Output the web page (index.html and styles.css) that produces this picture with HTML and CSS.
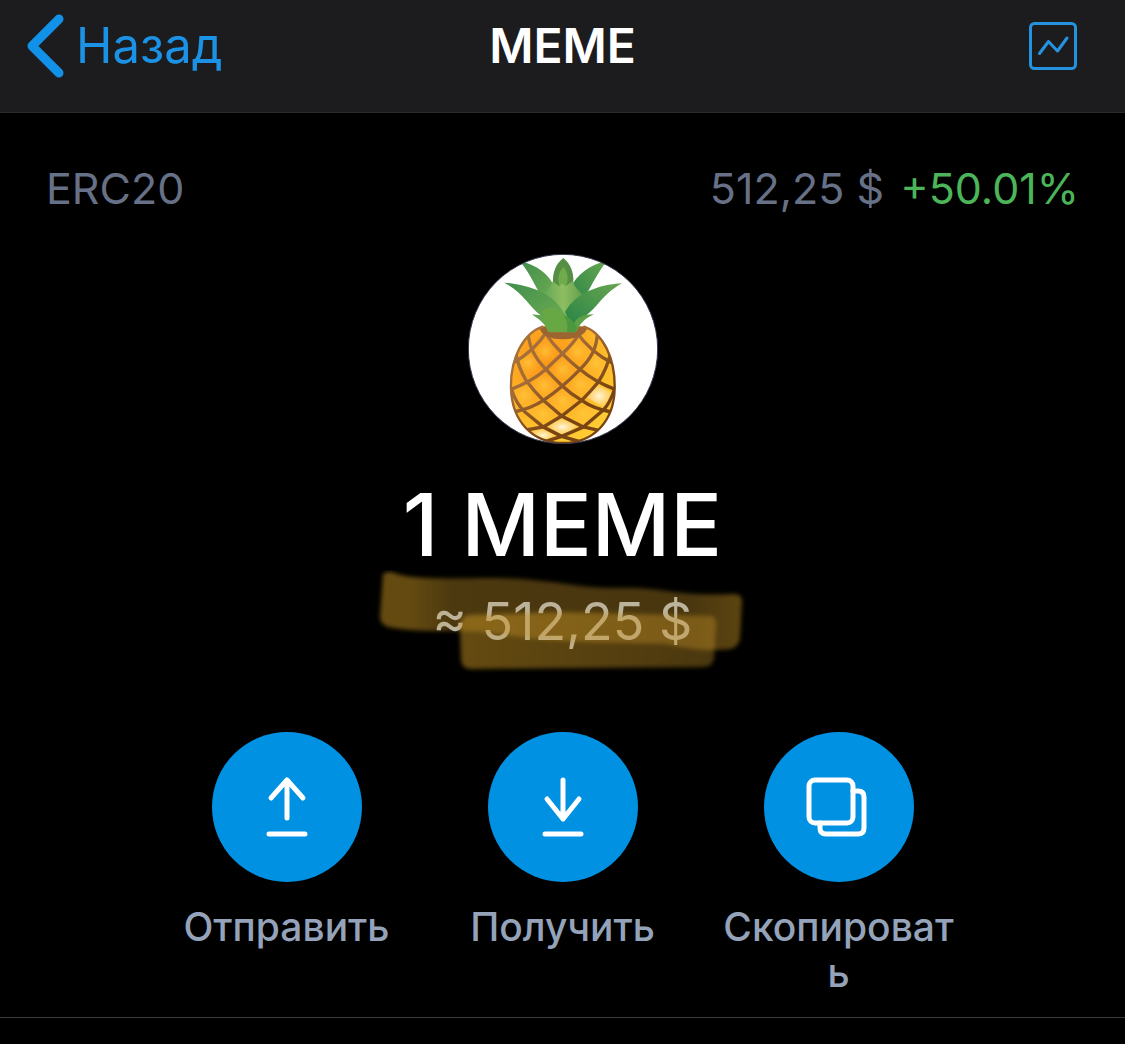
FILE: index.html
```html
<!DOCTYPE html>
<html lang="ru">
<head>
<meta charset="utf-8">
<meta name="viewport" content="width=device-width, initial-scale=1">
<title>MEME</title>
<link rel="stylesheet" href="styles.css">
</head>
<body>
<header class="navbar">
  <a class="back" href="#">
    <svg class="back-icon" viewBox="0 0 38 64" aria-hidden="true"><path d="M33 5 6 32l27 27"/></svg>
    <span>Назад</span>
  </a>
  <h1 class="navbar-title">MEME</h1>
  <button class="chart-button" type="button" aria-label="График">
    <svg class="chart-icon" viewBox="0 0 48 48" aria-hidden="true"><rect x="1.5" y="1.5" width="45" height="45" rx="4"/><path d="M10.500 31.500 19.500 19.500l9 9.500L38 16"/></svg>
  </button>
</header>
<main>
  <div class="info">
    <span>ERC20</span>
    <span class="price">512,25 $ <span class="change">+50.01%</span></span>
  </div>
  <section class="balance">
    <svg class="coin" viewBox="24 26 570 570" role="img" aria-label="Ананас">
      <defs>
        <clipPath id="disc"><circle cx="309" cy="311" r="285"/></clipPath>
        <clipPath id="fruit"><path d="M250 243C190 262 150 340 153 430 156 525 215 593 309 593S462 525 464 430C466 340 430 262 370 243Z"/></clipPath>
        <radialGradient id="skin" cx=".35" cy=".3" r=".75"><stop offset="0" stop-color="#fb9417"/><stop offset=".5" stop-color="#feae24"/><stop offset="1" stop-color="#ffd034"/></radialGradient>
        <radialGradient id="cell"><stop offset="0" stop-color="#ffc83c" stop-opacity=".8"/><stop offset="1" stop-color="#ffb52b" stop-opacity="0"/></radialGradient>
        <radialGradient id="shine"><stop offset="0" stop-color="#fff6df"/><stop offset="1" stop-color="#ffd677" stop-opacity=".5"/></radialGradient>
        <linearGradient id="net" x1="150" y1="240" x2="350" y2="500" gradientUnits="userSpaceOnUse"><stop offset="0" stop-color="#a8743b"/><stop offset=".5" stop-color="#a36b36"/><stop offset="1" stop-color="#794413"/></linearGradient>
        <linearGradient id="leafLeft" x1="0" y1="0" x2="1" y2="1"><stop offset="0" stop-color="#418e4d"/><stop offset="1" stop-color="#72af52"/></linearGradient>
        <linearGradient id="leafRight" x1="1" y1="0" x2="0" y2="1"><stop offset="0" stop-color="#68a651"/><stop offset="1" stop-color="#288346"/></linearGradient>
        <linearGradient id="leafMid" x1="0" y1="0" x2="1" y2="0"><stop offset="0" stop-color="#5da553"/><stop offset=".5" stop-color="#8fbd61"/><stop offset="1" stop-color="#5b9d4b"/></linearGradient>
      </defs>
      <circle cx="309" cy="311" r="284" fill="#fff"/>
      <g clip-path="url(#disc)">
        <g clip-path="url(#fruit)">
          <path d="M140 230h340v370H140Z" fill="url(#skin)"/>
          <g fill="url(#cell)">
            <circle cx="256" cy="318" r="38"/><circle cx="352" cy="318" r="38"/><circle cx="205" cy="352" r="38"/><circle cx="307" cy="372" r="38"/><circle cx="408" cy="354" r="42"/>
            <circle cx="252" cy="419" r="42"/><circle cx="362" cy="417" r="44"/><circle cx="193" cy="448" r="40"/><circle cx="307" cy="466" r="42"/><circle cx="248" cy="505" r="44"/><circle cx="370" cy="505" r="44"/>
          </g>
          <path d="M378 456 415 418l42 24-27 43Z" fill="url(#shine)"/>
          <path d="M262 542 305 519l48 24-46 27Z" fill="url(#shine)"/>
          <path d="M214 558 247 550l38 20-36 20Z" fill="url(#shine)"/>
          <g fill="none" stroke="url(#net)" stroke-width="10">
            <path d="M204 260C206 305 226 340 258 372Q282 398 307 422T365 465Q400 490 455 500"/>
            <path d="M250 255Q276 294 307 325T360 372Q404 410 470 434"/>
            <path d="M348 258Q390 320 462 356"/>
            <path d="M166 318Q175 368 200 408Q222 438 250 465L305 512 370 545 420 556"/>
            <path d="M154 430Q167 474 195 500L250 545 305 573 370 592"/>
            <path d="M412 260C412 308 392 340 360 372Q335 398 307 422T250 465Q216 488 162 500"/>
            <path d="M365 255Q341 294 307 325T258 372Q214 410 148 434"/>
            <path d="M262 255Q226 316 154 356"/>
            <path d="M453 318Q442 368 415 410Q392 438 365 465L305 512 250 545 198 554"/>
            <path d="M464 430Q450 474 430 494L370 545 305 573 245 592"/>
          </g>
          <path d="M236 240h148q-6 40-75 42-67-1-73-42Z" fill="#9b6431"/>
        </g>
        <path d="M250 243C190 262 150 340 153 430 156 525 215 593 309 593S462 525 464 430C466 340 430 262 370 243" fill="none" stroke="url(#net)" stroke-width="7"/>
        <path d="M180 48C230 58 268 88 284 126L290 190 250 162C226 128 216 92 180 48Z" fill="url(#leafLeft)"/>
        <path d="M441 46C390 58 350 88 332 126L330 195 368 162C394 128 406 90 441 46Z" fill="url(#leafRight)"/>
        <path d="M310 38C289 54 277 80 279 112L310 139 340 112C342 80 330 54 310 38Z" fill="#568f43"/>
        <path d="M310 65C295 82 292 98 299 125L317 125C326 102 325 84 310 65Z" fill="#6faa4d"/>
        <path d="M244 153C258 140 272 124 278 108L298 123 306 114 316 123 338 108C344 125 356 140 375 153L357 217 313 246 262 220Z" fill="url(#leafMid)"/>
        <path d="M133 112C205 118 272 142 304 190 328 224 325 239 315 259H264C259 239 241 225 216 207L242 210C208 186 192 144 133 112Z" fill="url(#leafLeft)"/>
        <path d="M486 114C412 118 345 146 315 200L330 232 347 245 376 212C410 190 428 146 486 114Z" fill="url(#leafRight)"/>
        <path d="M402 207C363 208 348 218 338 242L350 259C359 236 373 220 402 207Z" fill="#5ca146"/>
        <path d="M248 196C262 182 286 184 308 206 326 222 338 233 351 250L347 261H268L256 244Z" fill="#68a844"/>
        <path d="M309 208C324 213 340 224 351 247L346 261H320C326 240 321 224 309 208Z" fill="#4c983f"/>
      </g>
      <circle cx="309" cy="311" r="284" fill="none" stroke="#34384d" stroke-width="3"/>
    </svg>
    <p class="amount">1 MEME</p>
    <p class="fiat">≈ 512,25 $
      <svg class="marker" viewBox="0 0 370 104" aria-hidden="true">
        <defs>
          <linearGradient id="inkTop"><stop offset="0" stop-color="#c99524" stop-opacity=".5"/><stop offset=".08" stop-color="#c99524" stop-opacity=".5"/><stop offset=".2" stop-color="#c99524" stop-opacity=".38"/><stop offset=".85" stop-color="#c99524" stop-opacity=".36"/><stop offset="1" stop-color="#c99524" stop-opacity=".46"/></linearGradient>
          <linearGradient id="inkLow"><stop offset="0" stop-color="#c99524" stop-opacity=".5"/><stop offset="1" stop-color="#c99524" stop-opacity=".37"/></linearGradient>
          <filter id="soft"><feGaussianBlur stdDeviation="2"/></filter>
        </defs>
        <g filter="url(#soft)">
          <path d="M7 4Q13 0 21 4C46 12 105 6 145 9S210 19 245 18C289 17 300 27 358 24Q366 24 366 31L364 68Q363 77 354 79C330 82 309 78 290 74 240 72 190 74 130 65 85 57 55 65 12 57Q4 54 4 47Z" fill="url(#inkTop)"/>
          <path d="M92 45 185 42 336 46Q341 48 340 58L338 88Q337 97 326 97L94 99Q85 98 85 89L84 58Q84 47 92 45Z" fill="url(#inkLow)"/>
        </g>
      </svg>
    </p>
  </section>
  <div class="actions">
    <button class="action" type="button">
      <span class="action-circle"><svg class="action-icon" viewBox="0 0 60 60" aria-hidden="true"><path d="M30 41V4M14 21 30 3l16 18M12 57h36"/></svg></span>
      <span class="action-label">Отправить</span>
    </button>
    <button class="action" type="button">
      <span class="action-circle"><svg class="action-icon" viewBox="0 0 60 60" aria-hidden="true"><path d="M30 3v39M14 22l16 20 16-20M12 57h36"/></svg></span>
      <span class="action-label">Получить</span>
    </button>
    <button class="action" type="button">
      <span class="action-circle"><svg class="action-icon" viewBox="0 0 60 60" aria-hidden="true"><rect x="0" y="3" width="44" height="43" rx="6"/><path d="M44 14h5q6 0 6 6v31q0 6-6 6H17q-6 0-6-6v-5"/></svg></span>
      <span class="action-label">Скопировать</span>
    </button>
  </div>
</main>
</body>
</html>
```
FILE: styles.css
```css
* {
  box-sizing: border-box;
}

body {
  margin: 0;
  background: #000;
  color: #fff;
  font-family: Inter, "Liberation Sans", sans-serif;
}

button {
  padding: 0;
  border: 0;
  background: none;
  color: inherit;
  font: inherit;
  cursor: pointer;
}

svg {
  display: block;
}

.navbar {
  display: grid;
  grid-template-columns: 1fr auto 1fr;
  align-items: center;
  padding: 14px 26px 34px;
  border-bottom: 1px solid #2b2b2e;
  background: #1c1c1e;
}

.back {
  display: flex;
  align-items: center;
  gap: 12px;
  color: #1c92e6;
  font-size: 49px;
  font-weight: 400;
  line-height: 64px;
  text-decoration: none;
}

.back-icon {
  width: 38px;
  height: 64px;
  fill: none;
  stroke: #1192e8;
  stroke-width: 9;
  stroke-linecap: round;
  stroke-linejoin: round;
}

.navbar-title {
  margin: 0;
  font-size: 48px;
  font-weight: 600;
  line-height: 64px;
}

.chart-button {
  justify-self: end;
  margin-right: 22px;
}

.chart-icon {
  width: 48px;
  height: 48px;
  fill: none;
  stroke: #2592e0;
  stroke-width: 3;
  stroke-linecap: round;
  stroke-linejoin: round;
}

.info {
  display: flex;
  justify-content: space-between;
  padding: 48px 46px 0;
  color: #667086;
  font-size: 43px;
  font-weight: 400;
  line-height: 54px;
}

.change {
  margin-left: 4px;
  color: #4db559;
}

.balance {
  display: flex;
  flex-direction: column;
  align-items: center;
  padding-top: 39px;
}

.coin {
  width: 190px;
  height: 190px;
}

.amount {
  margin: 28px 0 0;
  font-size: 86px;
  font-weight: 500;
  line-height: 106px;
}

.fiat {
  position: relative;
  margin: 12px 0 0;
  color: #b4c4de;
  font-size: 52px;
  font-weight: 400;
  line-height: 64px;
}

.marker {
  position: absolute;
  top: -20px;
  left: 50%;
  width: 370px;
  height: 104px;
  margin-left: -186px;
  pointer-events: none;
}

.actions {
  display: flex;
  justify-content: center;
  align-items: flex-start;
  gap: 40px;
  padding: 78px 0 21px;
  border-bottom: 1px solid #3c3c40;
}

.action {
  display: flex;
  flex-direction: column;
  align-items: center;
  gap: 22px;
  width: 236px;
}

.action-circle {
  display: grid;
  place-items: center;
  width: 150px;
  height: 150px;
  border-radius: 50%;
  background: #0091e3;
}

.action-icon {
  width: 60px;
  height: 60px;
  overflow: visible;
  fill: none;
  stroke: #fff;
  stroke-width: 5;
  stroke-linecap: round;
  stroke-linejoin: round;
}

.action-label {
  max-width: 100%;
  color: #94a3ba;
  font-size: 39px;
  font-weight: 500;
  line-height: 46px;
  overflow-wrap: anywhere;
}
```
